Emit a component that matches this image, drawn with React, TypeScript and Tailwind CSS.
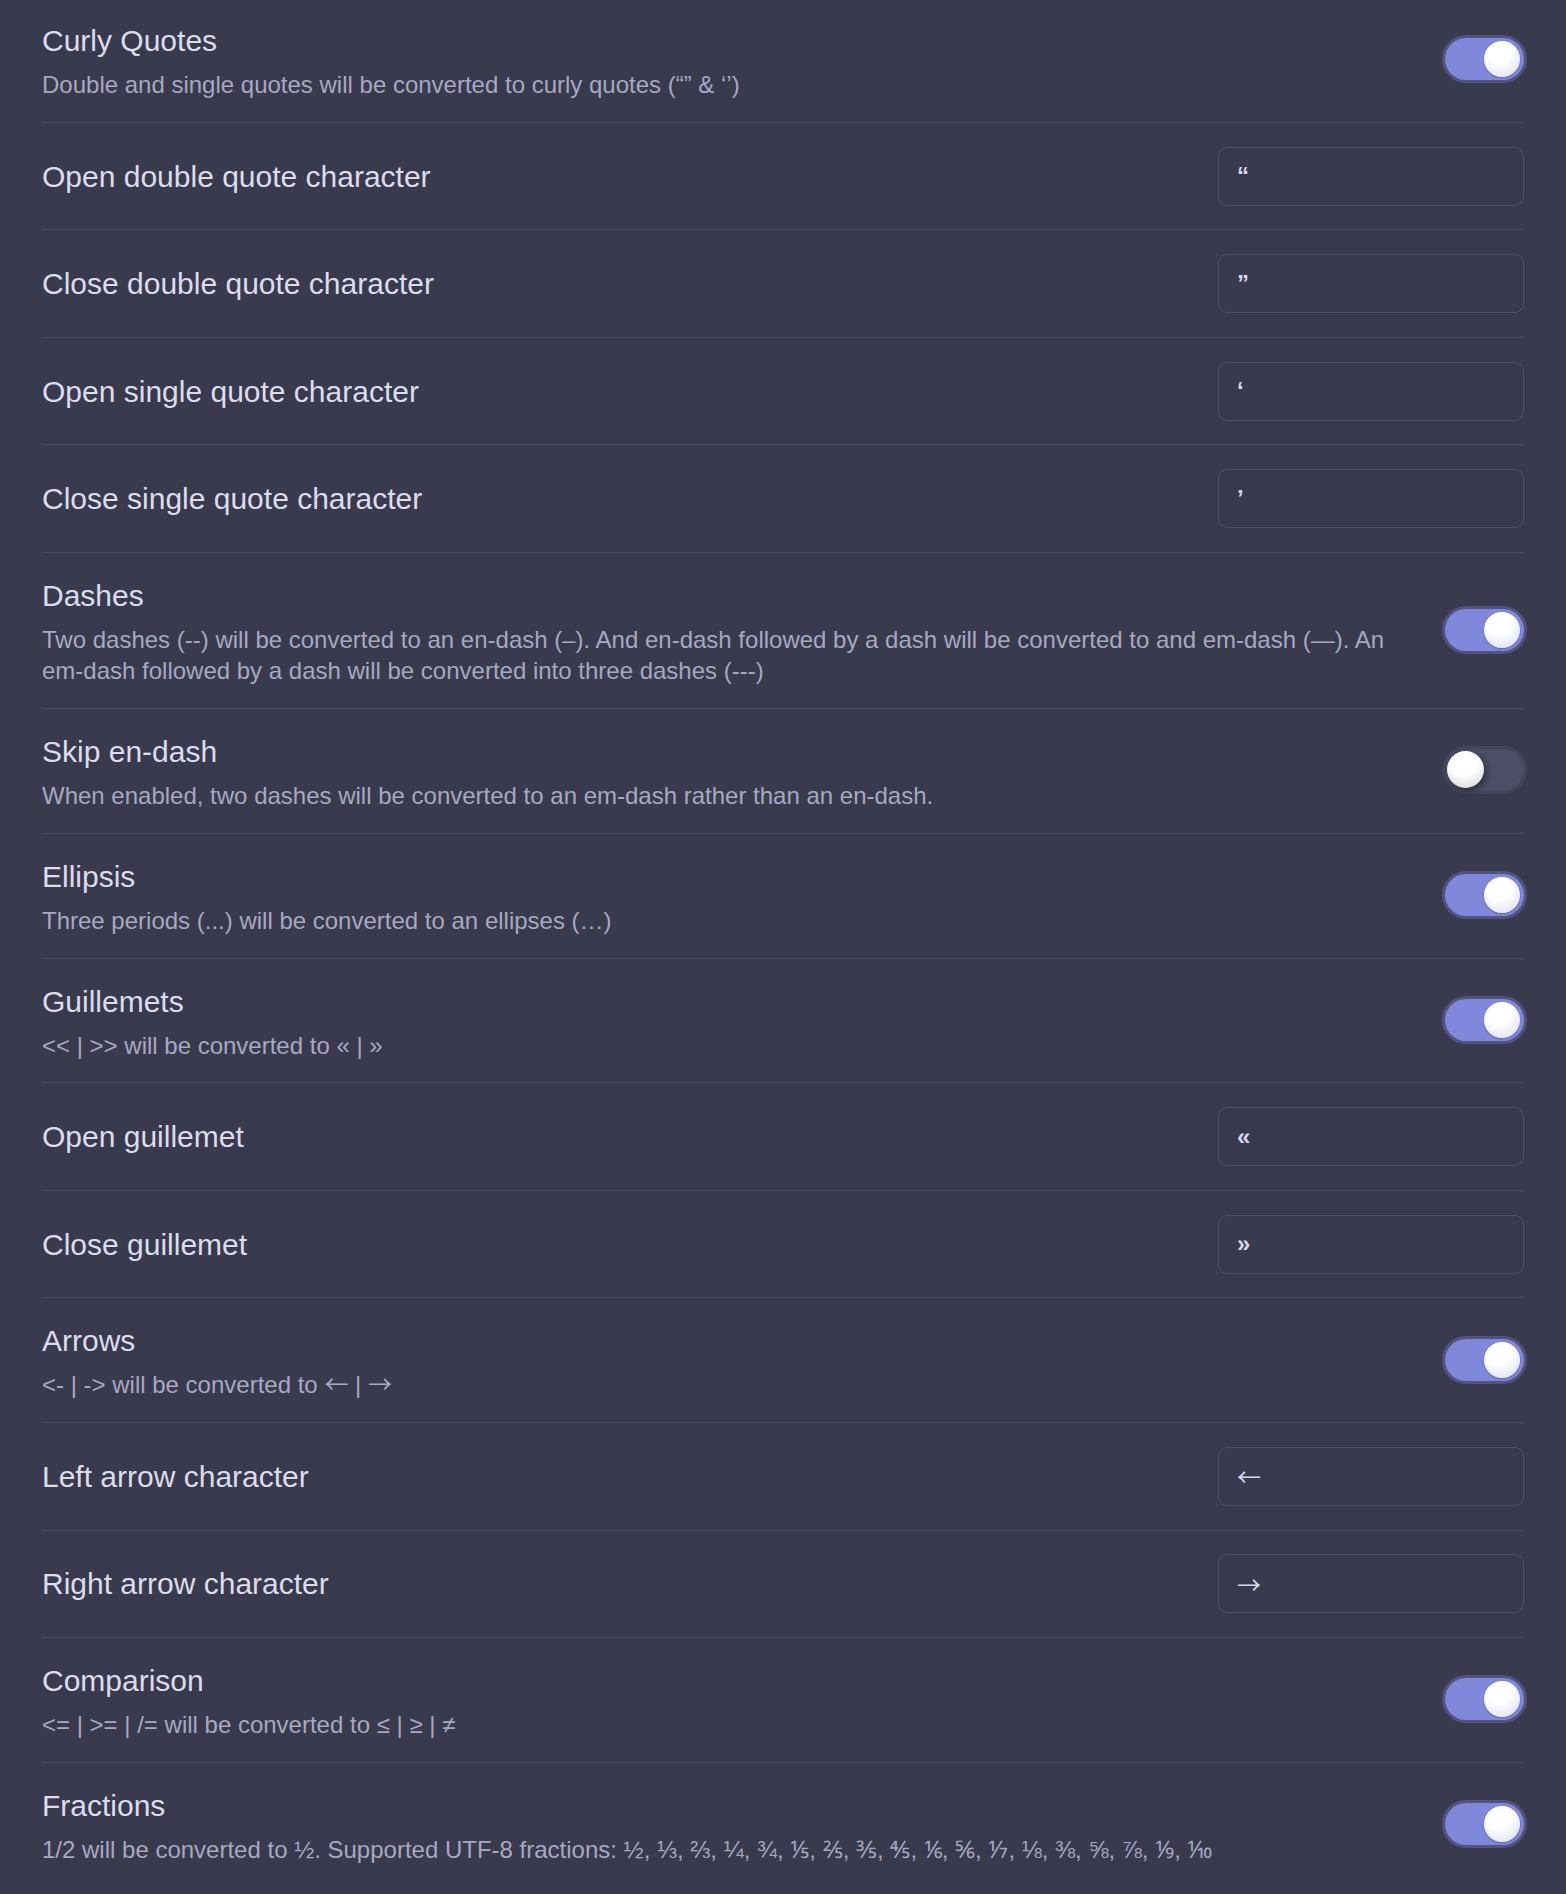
import React from 'react';

type Row =
  | { kind: 'toggle'; name: string; desc: React.ReactNode; on: boolean }
  | { kind: 'input'; name: string; value: React.ReactNode };

// Liberation Sans draws tiny arrows; the CJK face has long thin ones like the original
const Arrow = ({ ch }: { ch: string }) => (
  <span className="font-['Noto_Sans_CJK_SC',sans-serif] font-normal leading-[0]">{ch}</span>
);

const rows: Row[] = [
  { kind: 'toggle', name: 'Curly Quotes', desc: 'Double and single quotes will be converted to curly quotes (\u201C\u201D & \u2018\u2019)', on: true },
  { kind: 'input', name: 'Open double quote character', value: '\u201C' },
  { kind: 'input', name: 'Close double quote character', value: '\u201D' },
  { kind: 'input', name: 'Open single quote character', value: '\u2018' },
  { kind: 'input', name: 'Close single quote character', value: '\u2019' },
  {
    kind: 'toggle',
    name: 'Dashes',
    desc: 'Two dashes (--) will be converted to an en-dash (\u2013). And en-dash followed by a dash will be converted to and em-dash (\u2014). An em-dash followed by a dash will be converted into three dashes (---)',
    on: true,
  },
  { kind: 'toggle', name: 'Skip en-dash', desc: 'When enabled, two dashes will be converted to an em-dash rather than an en-dash.', on: false },
  { kind: 'toggle', name: 'Ellipsis', desc: 'Three periods (...) will be converted to an ellipses (\u2026)', on: true },
  { kind: 'toggle', name: 'Guillemets', desc: '<< | >> will be converted to \u00AB | \u00BB', on: true },
  { kind: 'input', name: 'Open guillemet', value: '\u00AB' },
  { kind: 'input', name: 'Close guillemet', value: '\u00BB' },
  {
    kind: 'toggle',
    name: 'Arrows',
    desc: (
      <>
        {'<- | -> will be converted to '}
        <Arrow ch={'\u2190'} />
        {' | '}
        <Arrow ch={'\u2192'} />
      </>
    ),
    on: true,
  },
  { kind: 'input', name: 'Left arrow character', value: <Arrow ch={'\u2190'} /> },
  { kind: 'input', name: 'Right arrow character', value: <Arrow ch={'\u2192'} /> },
  { kind: 'toggle', name: 'Comparison', desc: '<= | >= | /= will be converted to \u2264 | \u2265 | \u2260', on: true },
  {
    kind: 'toggle',
    name: 'Fractions',
    desc: '1/2 will be converted to \u00BD. Supported UTF-8 fractions: \u00BD, \u2153, \u2154, \u00BC, \u00BE, \u2155, \u2156, \u2157, \u2158, \u2159, \u215A, \u2150, \u215B, \u215C, \u215D, \u215E, \u2151, \u2152',
    on: true,
  },
];

function Toggle({ on }: { on: boolean }) {
  return (
    <button
      type="button"
      className={
        on
          ? 'relative w-[79px] h-[42px] flex-shrink-0 rounded-full bg-[#8088dc] shadow-[0_0_0_3px_#51547f]'
          : 'relative w-[79px] h-[42px] flex-shrink-0 rounded-full bg-[#4c4d66] shadow-[0_0_0_3px_#43445b]'
      }
    >
      {/* knob */}
      <span
        className={
          on
            ? 'absolute top-[3px] right-[4px] w-[36px] h-[36px] rounded-full bg-[radial-gradient(circle_at_42%_30%,#ffffff_35%,#d9daf5_100%)] shadow-[0_1px_2px_rgba(0,0,0,0.25)]'
            : 'absolute top-[2px] left-[2px] w-[37px] h-[37px] rounded-full bg-[radial-gradient(circle_at_45%_30%,#ffffff_40%,#cfcfd4_100%)] shadow-[2px_3px_6px_rgba(0,0,0,0.45)]'
        }
      />
    </button>
  );
}

export default function App() {
  return (
    <div className="min-h-[1894px] bg-[#393a4d] px-[42px] font-['Liberation_Sans',Arial,sans-serif]">
      {rows.map((row, i) => {
        const first = i === 0;
        if (row.kind === 'input') {
          return (
            <div
              key={row.name}
              className="flex items-center gap-[40px] border-t border-[#4a4a63] py-[23.75px]"
            >
              <div className="flex-1 text-[30px] leading-[45px] text-[#dcdcec]">{row.name}</div>
              <div className="w-[306px] h-[59px] flex-shrink-0 flex items-center rounded-[9px] border border-[#4f4f69] pl-[18px] text-[24px] font-bold text-[#d6d6ee]">
                {row.value}
              </div>
            </div>
          );
        }
        return (
          <div
            key={row.name}
            className={
              first
                ? 'flex items-center gap-[40px] pt-[18px] pb-[21.25px]'
                : 'flex items-center gap-[40px] border-t border-[#4a4a63] pt-[20px] pb-[21.25px]'
            }
          >
            <div className="flex-1">
              <div className="text-[30px] leading-[45px] text-[#dcdcec]">{row.name}</div>
              <div className="mt-[6px] text-[24px] leading-[31.5px] text-[#a7a8c2]">{row.desc}</div>
            </div>
            <Toggle on={row.on} />
          </div>
        );
      })}
    </div>
  );
}
